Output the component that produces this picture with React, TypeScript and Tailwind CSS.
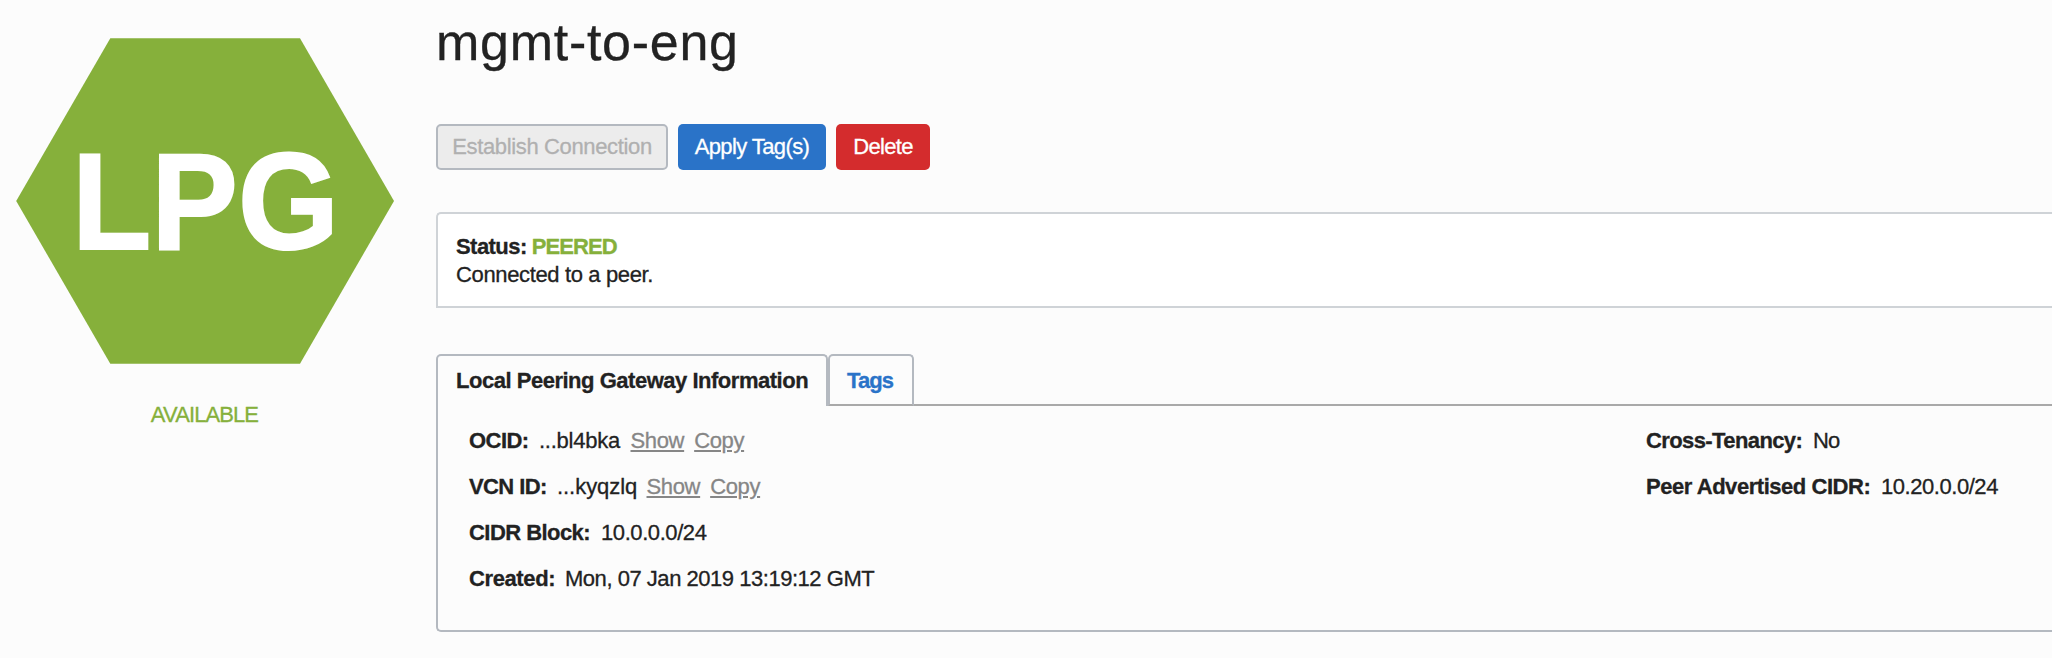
import type { ReactNode } from "react";

function StatusHexagon() {
  return (
    <svg className="block h-[344px] w-[410px]" viewBox="0 0 410 344" role="img" aria-label="LPG">
      <polygon points="16.2,181 110.3,18.3 300,18.3 394,181 300,343.7 110.3,343.7" fill="#86b03b" />
      <text
        x="72"
        y="228.5"
        fill="#ffffff"
        stroke="#ffffff"
        strokeWidth="2"
        fontSize="136.5"
        fontWeight="700"
        textLength="267"
        lengthAdjust="spacingAndGlyphs"
      >
        LPG
      </text>
    </svg>
  );
}

function Row({
  label,
  labelClass,
  value,
  valueClass,
  links = false,
}: {
  label: string;
  labelClass: string;
  value: string;
  valueClass: string;
  links?: boolean;
}) {
  return (
    <div className="flex h-[46px] whitespace-nowrap leading-[28px]">
      <span className={`shrink-0 font-bold ${labelClass}`}>{label}</span>
      <span className={`shrink-0 ${valueClass}`}>{value}</span>
      {links && (
        <span className="flex gap-[10px] tracking-[-0.35px] text-[#868686]">
          <TextLink>Show</TextLink>
          <TextLink>Copy</TextLink>
        </span>
      )}
    </div>
  );
}

function TextLink({ children }: { children: ReactNode }) {
  return (
    <a className="underline decoration-2 underline-offset-[2px]" href="#">
      {children}
    </a>
  );
}

export default function App() {
  return (
    <div className="flex h-[658px] w-full overflow-hidden bg-[#fcfcfc] font-['Liberation_Sans',Arial,sans-serif] text-[22px] text-[#222222] [-webkit-text-stroke-width:0.3px]">
      <aside className="flex w-[436px] shrink-0 flex-col pt-5">
        <StatusHexagon />
        <div className="mt-[37px] w-[409px] text-center leading-[28px] tracking-[-0.9px] text-[#86b03b]">
          AVAILABLE
        </div>
      </aside>

      <main className="min-w-0 flex-1">
        <h1 className="h-[124px] pt-[12px] text-[52px] leading-[60px] tracking-[0.72px]">mgmt-to-eng</h1>

        <div className="flex h-[46px] gap-[10px] whitespace-nowrap">
          <button
            disabled
            className="w-[232px] rounded-[5px] border-2 border-[#b4b9c0] bg-[#ececec] pb-[2px] tracking-[-0.35px] text-[#b0b0b0]"
          >
            Establish Connection
          </button>
          <button className="w-[148px] rounded-[5px] bg-[#2a73c8] pb-[2px] tracking-[-0.6px] text-white">
            Apply Tag(s)
          </button>
          <button className="w-[94px] rounded-[5px] bg-[#d42c2d] pb-[2px] tracking-[-0.7px] text-white">
            Delete
          </button>
        </div>

        <section className="mt-[42px] h-[96px] rounded-tl-[5px] border-2 border-r-0 border-[#cfd3d7] bg-white pt-[19px] pl-[18px] leading-[28px]">
          <div className="flex gap-[5px] font-bold">
            <span className="tracking-[-0.55px]">Status:</span>
            <span className="tracking-[-0.9px] text-[#86b03b]">PEERED</span>
          </div>
          <div className="tracking-[-0.36px]">Connected to a peer.</div>
        </section>

        <section className="mt-[46px]">
          <div className="flex h-[52px] whitespace-nowrap font-bold leading-[28px]">
            <div className="w-[392px] shrink-0 rounded-t-[5px] border-2 border-b-0 border-[#b4b9c0] pt-[11px] pl-[18px] tracking-[-0.48px]">
              Local Peering Gateway Information
            </div>
            <div className="w-[86px] shrink-0 rounded-t-[5px] border-2 border-[#b4b9c0] border-b-[#a9a9a9] pt-[11px] pl-[17px] tracking-[-0.9px] text-[#2a73c8]">
              Tags
            </div>
            <div className="flex-1 border-b-2 border-[#a9a9a9]" />
          </div>

          <div className="flex h-[226px] rounded-bl-[5px] border-b-2 border-l-2 border-[#b4b9c0] pt-[21px] pl-[31px]">
            <div className="w-[1177px] shrink-0">
              <Row label="OCID:" labelClass="w-[70px] tracking-[-0.55px]" value="...bl4bka" valueClass="w-[91.5px] tracking-[-0.25px]" links />
              <Row label="VCN ID:" labelClass="w-[88px] tracking-[-0.6px]" value="...kyqzlq" valueClass="w-[89.5px] tracking-[-0.05px]" links />
              <Row label="CIDR Block:" labelClass="w-[132px] tracking-[-0.55px]" value="10.0.0.0/24" valueClass="tracking-[-0.42px]" />
              <Row label="Created:" labelClass="w-[96px] tracking-[-0.39px]" value="Mon, 07 Jan 2019 13:19:12 GMT" valueClass="tracking-[-0.47px]" />
            </div>
            <div>
              <Row label="Cross-Tenancy:" labelClass="w-[167px] tracking-[-0.6px]" value="No" valueClass="tracking-[-1px]" />
              <Row label="Peer Advertised CIDR:" labelClass="w-[235px] tracking-[-0.46px]" value="10.20.0.0/24" valueClass="tracking-[-0.45px]" />
            </div>
          </div>
        </section>
      </main>
    </div>
  );
}
